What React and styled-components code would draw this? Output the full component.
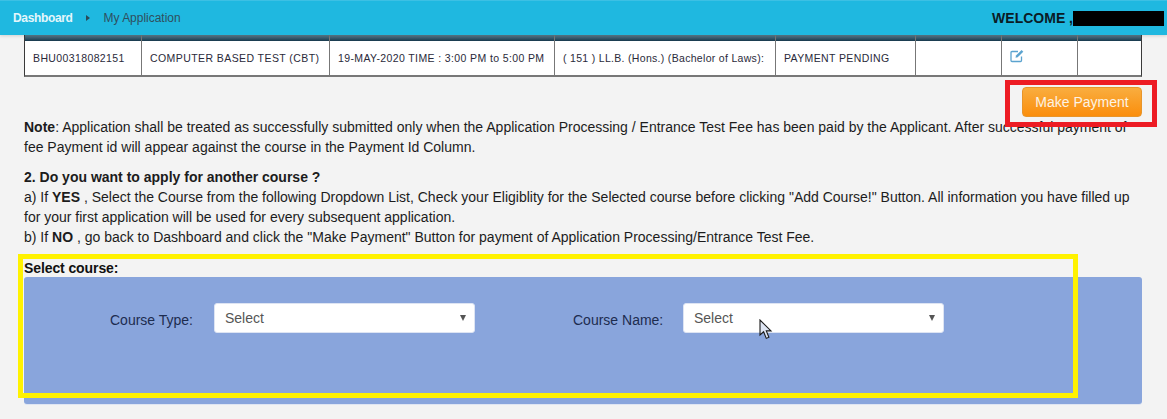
import React from "react";
import styled, { createGlobalStyle } from "styled-components";

const Global = createGlobalStyle`
  html, body { margin: 0; padding: 0; background: #f3f3f3; }
  body { font-family: "Liberation Sans", Arial, sans-serif; color: #1c1c1c; }
  #root { width: 1167px; height: 419px; overflow: hidden; position: relative; }
`;

const Header = styled.header`
  height: 35px;
  background: #1fb8e0;
  border-top: 1px solid #3cc0e4;
  box-sizing: border-box;
  display: flex;
  align-items: center;
  padding: 0 3px 0 13px;
  font-size: 12px;
  box-shadow: 0 1px 3px rgba(0, 0, 0, 0.15);
  position: relative;
  z-index: 1;
`;
const Crumb = styled.span`
  color: #e4f6fb;
  font-weight: bold;
  letter-spacing: -0.35px;
`;
const CrumbArrow = styled.span`
  width: 0;
  height: 0;
  margin: 0 14px 0 13px;
  border-left: 4px solid #2b4a58;
  border-top: 3px solid transparent;
  border-bottom: 3px solid transparent;
`;
const CrumbCurrent = styled.span`
  color: #2f4f5e;
  letter-spacing: -0.02px;
`;
const Welcome = styled.div`
  margin-left: auto;
  display: flex;
  align-items: center;
  font-size: 14px;
  font-weight: bold;
  color: #0b1c26;
`;
const Redact = styled.span`
  display: inline-block;
  width: 91px;
  height: 15px;
  margin-left: 0;
  background: #000;
`;

const Main = styled.main`
  padding: 0 25px 0 24px;
`;
const Table = styled.div`
  display: grid;
  grid-template-columns: 117px 188px 225px 221px 140px 86px 76px 1fr;
  height: 42px;
  border: solid #3a3a3a;
  border-width: 0 1px 2px 1px;
  border-bottom-color: #777;
  background: #fff;
  box-sizing: border-box;
`;
const Cell = styled.div`
  border-right: 1px solid #777;
  box-sizing: border-box;
  &:last-child { border-right: 0; }
  display: flex;
  flex-direction: column;
  font-size: 10.5px;
  letter-spacing: ${(p) => p.$track}px;
  color: #2a2a3a;
  white-space: nowrap;
`;
const CellHead = styled.div`
  height: 6px;
  flex: none;
  background: linear-gradient(#5d7f90, #16384c);
`;
const CellBody = styled.div`
  flex: 1;
  display: flex;
  align-items: center;
  padding-left: 8px;
`;
const EditIcon = styled.svg`
  width: 14px;
  height: 14px;
  margin-top: -4px;
  color: #5ba3cf;
`;

const ActionRow = styled.div`
  display: flex;
  justify-content: flex-end;
  margin-top: 10px;
  height: 30px;
`;
const PayButton = styled.button`
  width: 120px;
  height: 30px;
  border: 1px solid #e8952a;
  border-radius: 4px;
  background: linear-gradient(#f9ad3f, #fb8e0c);
  color: #fdf3e4;
  font: 14px "Liberation Sans", Arial, sans-serif;
  padding: 0;
`;
const Paragraph = styled.p`
  margin: ${(p) => p.$top || 0}px 0 0;
  font-size: 14px;
  line-height: 20px;
  white-space: nowrap;
`;
const Label = styled.div`
  margin-top: 13px;
  font-size: 14px;
  font-weight: bold;
  line-height: 16px;
  color: #111;
  letter-spacing: -0.1px;
`;
const Panel = styled.section`
  margin-top: 1px;
  width: 1118px;
  height: 127px;
  background: #89a5dc;
  border-radius: 3px;
  box-shadow: 0 1px 0 #dfe5f2;
  display: flex;
  align-items: flex-start;
  padding-top: 26px;
  box-sizing: border-box;
`;
const FieldLabel = styled.span`
  font-size: 14px;
  color: #1d2c4f;
  width: ${(p) => p.$w}px;
  text-align: right;
  margin-right: ${(p) => p.$gap}px;
  line-height: 30px;
  padding-top: 2px;
  white-space: nowrap;
`;
const SelectBox = styled.div`
  width: 261px;
  height: 30px;
  background: #fff;
  border: 1px solid #dde4f3;
  border-radius: 3px;
  box-sizing: border-box;
  display: flex;
  align-items: center;
  justify-content: space-between;
  padding: 0 8px 0 10px;
  font-size: 14px;
  color: #555;
  margin-right: ${(p) => p.$after || 0}px;
`;
const Caret = styled.span`
  width: 0;
  height: 0;
  border-top: 6px solid #555;
  border-left: 3px solid transparent;
  border-right: 3px solid transparent;
`;

const Highlight = styled.div`
  position: absolute;
  box-sizing: border-box;
  pointer-events: none;
  left: ${(p) => p.$x}px;
  top: ${(p) => p.$y}px;
  width: ${(p) => p.$w}px;
  height: ${(p) => p.$h}px;
  border: ${(p) => p.$b}px solid ${(p) => p.$c};
`;
const Cursor = styled.svg`
  position: absolute;
  left: 759px;
  top: 319px;
  width: 14px;
  height: 21px;
`;

const cells = [
  ["BHU00318082151", 0.38],
  ["COMPUTER BASED TEST (CBT)", 0.42],
  ["19-MAY-2020 TIME : 3:00 PM to 5:00 PM", 0.38],
  ["( 151 ) LL.B. (Hons.) (Bachelor of Laws):", 0.31],
  ["PAYMENT PENDING", 0.38],
  ["", 0],
  ["icon", 0],
  ["", 0],
];

export default function App() {
  return (
    <>
      <Global />
      <Header>
        <Crumb>Dashboard</Crumb>
        <CrumbArrow />
        <CrumbCurrent>My Application</CrumbCurrent>
        <Welcome>
          WELCOME ,<Redact />
        </Welcome>
      </Header>
      <Main>
        <Table>
          {cells.map(([text, track], i) => (
            <Cell key={i} $track={track}>
              <CellHead />
              <CellBody>
                {text === "icon" ? (
                  <EditIcon viewBox="0 0 14 14" fill="none" stroke="currentColor" strokeWidth="1.3">
                    <path d="M11.5 7.5V11.5a1 1 0 0 1-1 1H2a1 1 0 0 1-1-1V3.5a1 1 0 0 1 1-1h6" />
                    <path d="M5.5 8.8 6 6.6 11.6 1l1.7 1.7L7.7 8.3z" fill="currentColor" stroke="none" />
                  </EditIcon>
                ) : (
                  text
                )}
              </CellBody>
            </Cell>
          ))}
        </Table>
        <ActionRow>
          <PayButton>Make Payment</PayButton>
        </ActionRow>
        <Paragraph $top={0}>
          <b>Note</b>: Application shall be treated as successfully submitted only when the Application Processing / Entrance Test Fee has been paid by the Applicant. After successful payment of
          <br />
          fee Payment id will appear against the course in the Payment Id Column.
        </Paragraph>
        <Paragraph $top={10}>
          <b>2. Do you want to apply for another course ?</b>
          <br />
          a) If <b>YES</b> , Select the Course from the following Dropdown List, Check your Eligiblity for the Selected course before clicking "Add Course!" Button. All information you have filled up
          <br />
          for your first application will be used for every subsequent application.
          <br />
          b) If <b>NO</b> , go back to Dashboard and click the "Make Payment" Button for payment of Application Processing/Entrance Test Fee.
        </Paragraph>
        <Label>Select course:</Label>
        <Panel>
          <FieldLabel $w={169} $gap={21}>Course Type:</FieldLabel>
          <SelectBox $after={98}>
            Select
            <Caret />
          </SelectBox>
          <FieldLabel $w={89} $gap={21}>Course Name:</FieldLabel>
          <SelectBox>
            Select
            <Caret />
          </SelectBox>
        </Panel>
      </Main>
      <Highlight $x={1005} $y={80} $w={152} $h={47} $b={5} $c="#ed1c24" />
      <Highlight $x={18} $y={254} $w={1060} $h={144} $b={5} $c="#fff200" />
      <Cursor viewBox="0 0 14 21">
        <path d="M1 1v15l3.6-3.2 2.7 6.6 2.6-1.1-2.6-6.4H12z" fill="#dfe6f4" stroke="#1a1a1a" strokeWidth="1.1" />
      </Cursor>
    </>
  );
}
